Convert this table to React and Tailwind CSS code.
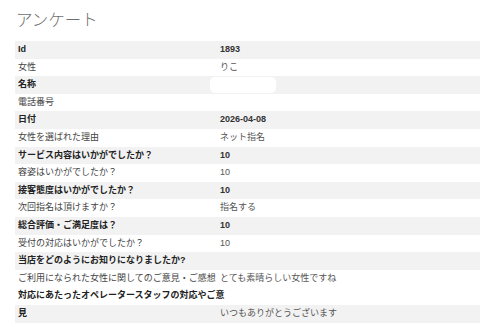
const rows = [
  { label: "Id", value: "1893" },
  { label: "女性", value: "りこ" },
  { label: "名称", value: "", hidden: true },
  { label: "電話番号", value: "" },
  { label: "日付", value: "2026-04-08" },
  { label: "女性を選ばれた理由", value: "ネット指名" },
  { label: "サービス内容はいかがでしたか？", value: "10" },
  { label: "容姿はいかがでしたか？", value: "10" },
  { label: "接客態度はいかがでしたか？", value: "10" },
  { label: "次回指名は頂けますか？", value: "指名する" },
  { label: "総合評価・ご満足度は？", value: "10" },
  { label: "受付の対応はいかがでしたか？", value: "10" },
  { label: "当店をどのようにお知りになりましたか?", value: "" },
  { label: "ご利用になられた女性に関してのご意見・ご感想", value: "とても素晴らしい女性ですね" },
  { label: "対応にあたったオペレータースタッフの対応やご意", value: "", striped: false, bold: true },
  { label: "見", value: "いつもありがとうございます", striped: true, bold: true, plainValue: true },
]

export default function App() {
  return (
    <div className="bg-white min-h-screen pl-[15px] font-['Liberation_Sans','Noto_Sans_CJK_JP',sans-serif]">
      {/* タイトル */}
      <div className="h-[41px] flex items-center">
        <h1 className="text-[16.5px] text-[#6f6f6f] font-light pl-[1px]">アンケート</h1>
      </div>

      {/* 回答テーブル */}
      <div className="flex flex-col">
        {rows.map((r, i) => {
          const striped = r.striped ?? i % 2 === 0
          const bold = r.bold ?? striped
          const valueBold = bold && !r.plainValue
          return (
            <div
              key={i}
              className={`grid grid-cols-[205px_1fr] h-[17.6px] items-center text-[9px] ${
                striped ? "bg-[#f2f2f2]" : "bg-white"
              }`}
            >
              <div
                className={`pl-[3px] whitespace-nowrap ${
                  bold ? "font-bold text-[#222]" : "font-normal text-[#444]"
                }`}
              >
                {r.label}
              </div>
              <div
                className={`whitespace-nowrap ${
                  valueBold ? "font-bold text-[#333]" : "font-normal text-[#555]"
                }`}
              >
                {r.hidden ? (
                  <div className="ml-[-10px] w-[66px] h-[16px] bg-white rounded-[5px]" />
                ) : (
                  r.value
                )}
              </div>
            </div>
          )
        })}
      </div>
    </div>
  )
}
